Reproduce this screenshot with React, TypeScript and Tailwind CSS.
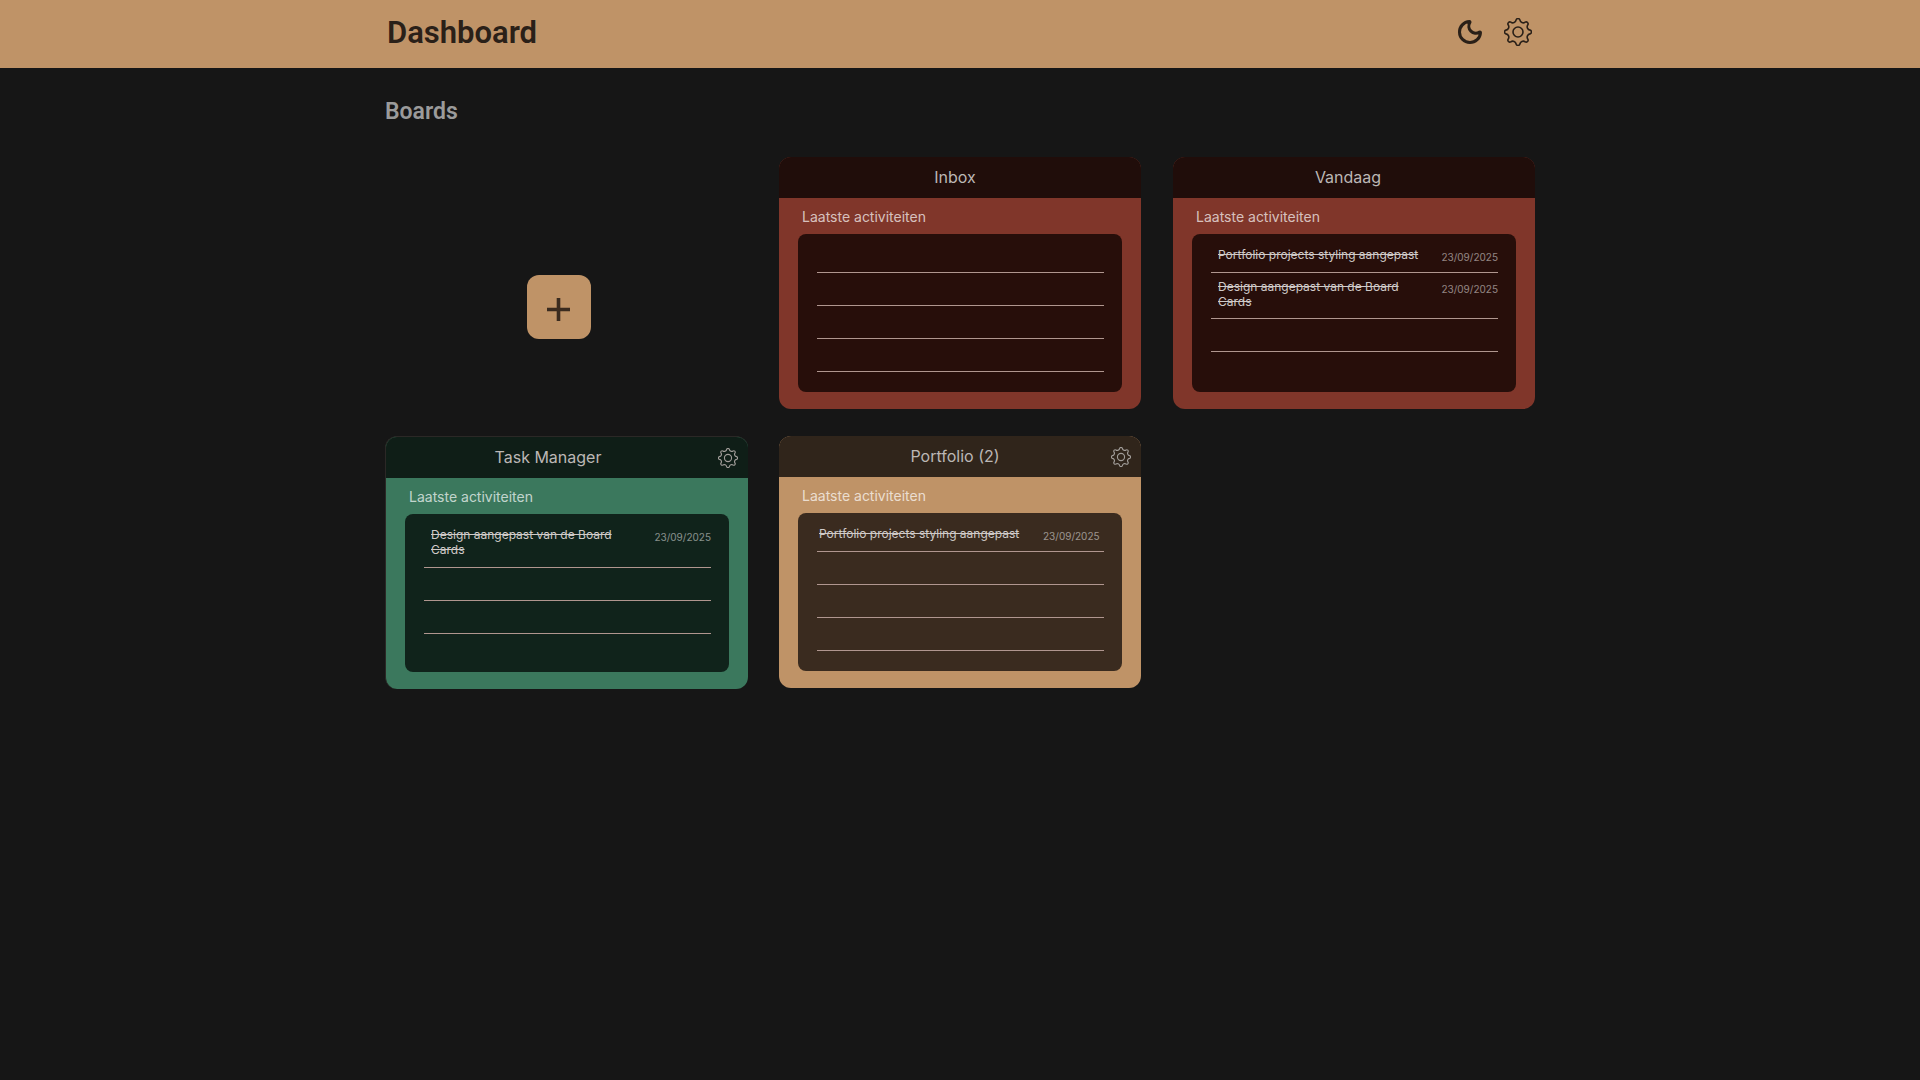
import React from "react";
import clsx from "clsx";
import { Moon } from "lucide-react";

type Board = {
  id: number;
  name: string;
  color: "red" | "green" | "brown";
  editable?: boolean;
  titleClass: string;
  itemClass: string;
  activities: { title: string; date: string }[];
  rows: number;
};

const boards: Board[] = [
  { id: 1, name: "Inbox", color: "red", titleClass: "pr-2.5", itemClass: "pl-[7px]", activities: [], rows: 4 },
  {
    id: 2,
    name: "Vandaag",
    color: "red",
    titleClass: "pr-3",
    itemClass: "pl-[7px]",
    activities: [
      { title: "Portfolio projects styling aangepast", date: "23/09/2025" },
      { title: "Design aangepast van de Board Cards", date: "23/09/2025" },
    ],
    rows: 3,
  },
  {
    id: 3,
    name: "Task Manager",
    color: "green",
    editable: true,
    titleClass: "pr-[38px]",
    itemClass: "pl-[7px]",
    activities: [{ title: "Design aangepast van de Board Cards", date: "23/09/2025" }],
    rows: 3,
  },
  {
    id: 4,
    name: "Portfolio (2)",
    color: "brown",
    editable: true,
    titleClass: "pr-2.5",
    itemClass: "pl-[2px]",
    activities: [{ title: "Portfolio projects styling aangepast", date: "23/09/2025" }],
    rows: 4,
  },
];

const colors = {
  red: { card: "bg-[#80362a]", header: "bg-[#200d0a]", panel: "bg-[#270e0a]" },
  green: {
    card: "-mr-px border-t border-l border-[#2b2826] bg-[#3b785d]",
    header: "bg-[#0f1e17]",
    panel: "bg-[#10231b]",
  },
  brown: { card: "bg-[#bf9367]", header: "bg-[#30251b]", panel: "bg-[#3a2b1f]" },
};

// eight rounded teeth with hollow arcs between them
function gearPath() {
  const point = (degrees: number) => {
    const rad = (degrees * Math.PI) / 180;
    return `${(14 + 12.2 * Math.cos(rad)).toFixed(2)} ${(14 + 12.2 * Math.sin(rad)).toFixed(2)}`;
  };
  let d = `M${point(-9)}`;
  for (let angle = 0; angle < 360; angle += 45) {
    d += `A2 2 0 0 1 ${point(angle + 9)}A3.3 3.3 0 0 0 ${point(angle + 36)}`;
  }
  return d + "Z";
}

const gear = gearPath();

function GearIcon(props: { className: string }) {
  return (
    <svg
      viewBox="0 0 28 28"
      fill="none"
      stroke="currentColor"
      strokeWidth="1.6"
      strokeLinejoin="round"
      className={props.className}
      aria-hidden="true"
    >
      <path d={gear} />
      <circle cx="14" cy="14" r="5" />
    </svg>
  );
}

function BoardCard(props: { board: Board }) {
  const { board } = props;
  const color = colors[board.color];
  const rows = Array.from({ length: board.rows }, (_, i) => board.activities[i]);

  return (
    <article className={clsx("self-start overflow-hidden rounded-xl pb-[17px]", color.card)}>
      <div className={clsx("relative flex h-[41px] items-center", color.header)}>
        <h3 className={clsx("w-full pb-0.5 text-center text-base text-[#bcb7b5]", board.titleClass)}>{board.name}</h3>
        {board.editable && (
          <button type="button" aria-label="Board instellingen" className="absolute right-2.5 text-[#a09c98]">
            <GearIcon className="size-5" />
          </button>
        )}
      </div>
      <p className="mt-[9px] pl-[23px] text-sm leading-5 text-white/70">Laatste activiteiten</p>
      <ul className={clsx("mx-[19px] mt-[7px] min-h-[158px] rounded-lg pt-[5px] pr-[18px] pl-[19px]", color.panel)}>
        {rows.map((activity, i) => (
          <li
            key={i}
            className="min-h-[33px] border-b border-[#b0968f] pt-1.5 pb-[9px] first:min-h-[34px] first:pt-2 first:pb-2.5"
          >
            {activity && (
              <div className={clsx("flex gap-5", board.itemClass)}>
                <span className="w-[204px] text-xs leading-[15px] text-[#cfcac8] line-through">{activity.title}</span>
                <time className="h-[15px] text-[10px] leading-[20px] text-white/50">{activity.date}</time>
              </div>
            )}
          </li>
        ))}
      </ul>
    </article>
  );
}

export default function App() {
  return (
    <div className="min-h-screen bg-[#161616] font-['Inter',sans-serif]">
      <header className="bg-[#bf9367] text-[#2a2018]">
        <div className="mx-auto flex h-[68px] max-w-[1150px] items-center justify-between pr-[3px] pb-1">
          <h1 className="pt-0.5 pl-0.5 font-['Roboto',sans-serif] text-[31px] font-semibold">Dashboard</h1>
          <div className="flex gap-5">
            <button type="button" aria-label="Donkere modus">
              <Moon size={28} strokeWidth={2.6} />
            </button>
            <button type="button" aria-label="Instellingen">
              <GearIcon className="size-7" />
            </button>
          </div>
        </div>
      </header>
      <main className="mx-auto max-w-[1150px] pt-7">
        <h2 className="font-['Roboto',sans-serif] text-[23px] leading-8 font-semibold text-[#9b9b9b]">Boards</h2>
        <div className="mt-[29px] grid grid-cols-3 gap-x-8 gap-y-[27px]">
          <div className="flex items-center justify-center pt-12 pr-3.5">
            <button
              type="button"
              aria-label="Board toevoegen"
              className="flex size-16 items-center justify-center rounded-xl bg-[#bf9367] pt-1.5 text-[#3a2b1f]"
            >
              <svg viewBox="0 0 24 24" className="size-6" stroke="currentColor" strokeWidth="3.6" aria-hidden="true">
                <path d="M11.5 0V23M0 11.5H23" />
              </svg>
            </button>
          </div>
          {boards.map((board) => (
            <BoardCard key={board.id} board={board} />
          ))}
        </div>
      </main>
    </div>
  );
}
